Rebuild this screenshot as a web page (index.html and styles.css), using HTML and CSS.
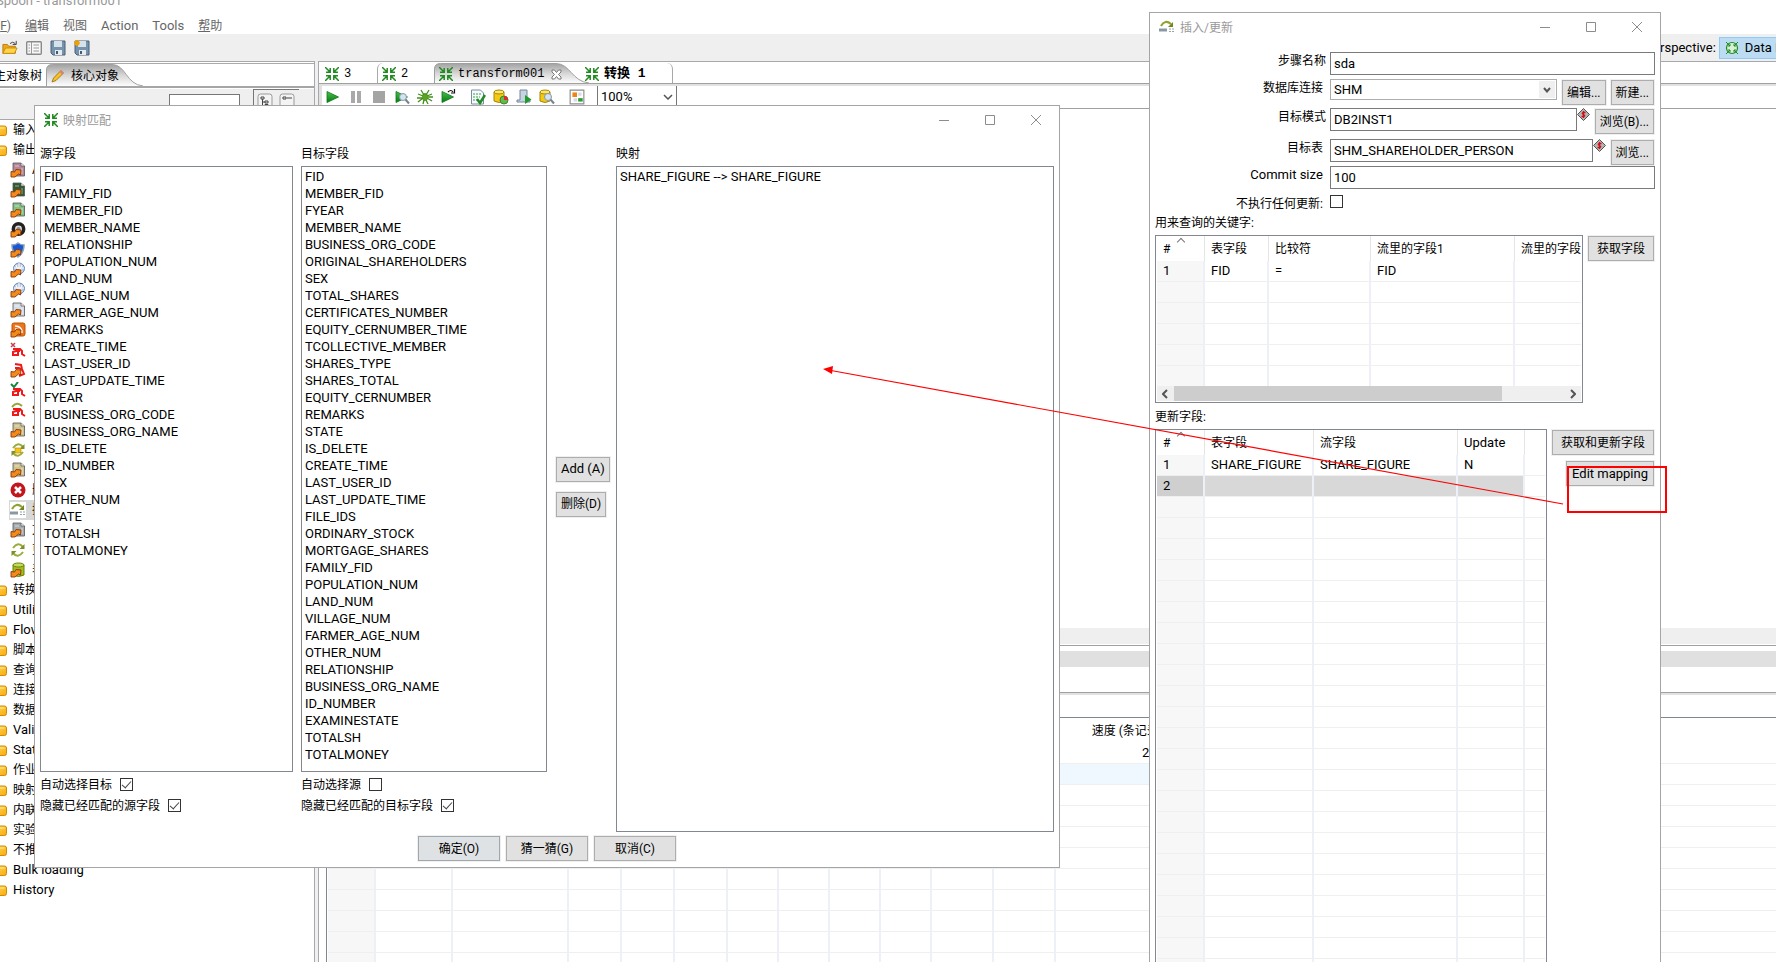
FILE: index.html
```html
<!DOCTYPE html>
<html lang="zh-CN">
<head>
<meta charset="utf-8">
<title>Spoon - transform001</title>
<link rel="stylesheet" href="styles.css">
</head>
<body>
<svg class="defs" aria-hidden="true">
  <linearGradient id="tabfill" x1="0" y1="0" x2="0" y2="1"><stop offset="0" stop-color="#a2a2a2"/><stop offset=".5" stop-color="#d6d6d6"/><stop offset="1" stop-color="#fdfdfd"/></linearGradient>
  <linearGradient id="goldfill" x1="0" y1="0" x2="1" y2="1"><stop offset="0" stop-color="#ffe56a"/><stop offset="1" stop-color="#fba80a"/></linearGradient>
  <linearGradient id="greenfill" x1="0" y1="0" x2="0" y2="1"><stop offset="0" stop-color="#4cc04c"/><stop offset="1" stop-color="#067a10"/></linearGradient>
  <symbol id="kettle" viewBox="0 0 14 14"><g fill="none" stroke="#1f8a1f" stroke-width="1.5"><path d="M0 0l5 5M5.2 1v4.2H1M14 0L9 5M8.800 1v4.200H13M0 14l5-5M5.200 13V8.800H1M14 14L9 9M8.800 13V8.800H13"/></g></symbol>
  <symbol id="folder" viewBox="0 0 16 12"><path d="M.5 2.500a2 2 0 0 1 2-2h4l2 1.500h5a2 2 0 0 1 2 2v5.500a2 2 0 0 1-2 2h-11a2 2 0 0 1-2-2z" fill="url(#goldfill)" stroke="#cf8a06"/><path d="M1 4h12.500" stroke="#fff0a0"/></symbol>
  <symbol id="out" viewBox="0 0 16 16"><path d="M1 15V9.500l3.500.500L6 7.500 11 8l-.500 5-2-1-3.500 3z" fill="#f28a1c" stroke="#8a3606" stroke-width=".9"/></symbol>
  <symbol id="doc" viewBox="0 0 16 16"><path d="M3 1h8l3.500 3v10H3z" fill="currentColor" stroke="#555" stroke-width=".8"/><path d="M11 1v3h3.500" fill="#eee" stroke="#555" stroke-width=".7"/><path d="M12 6v6M5 4h4" stroke="#fff" opacity=".5"/><use href="#out"/></symbol>
  <symbol id="ring" viewBox="0 0 16 16"><circle cx="8.500" cy="7" r="5.200" fill="#ddd" stroke="#222" stroke-width="3.500"/><circle cx="8.500" cy="7" r="2" fill="#888"/><use href="#out"/></symbol>
  <symbol id="shield" viewBox="0 0 16 16"><path d="M2 3q3.500 0 6-2 3 2 6 2 0 8-6 12-6-4-6-12z" fill="#1558d8" stroke="#8ca0b8" stroke-width="1.500"/><use href="#out"/></symbol>
  <symbol id="globe" viewBox="0 0 16 16"><circle cx="9" cy="6.500" r="5.500" fill="#b9cbe6" stroke="#7089b4"/><path d="M9 1v11M4 6h10M6 3q3 4 0 7M12 3q-3 4 0 7" stroke="#fff" fill="none"/><use href="#out"/></symbol>
  <symbol id="rss" viewBox="0 0 16 16"><rect x="2" y="1" width="13" height="13" rx="2" fill="#ee751b" stroke="#b9540a"/><path d="M5 4q7 0 7 7M5 7q4 0 4 4" stroke="#fff" stroke-width="1.600" fill="none"/><use href="#out"/></symbol>
  <symbol id="sf" viewBox="0 0 16 16"><path d="M3 7h7l2 2v3l3 2M10 9H6l-3 1v3h5v-3" fill="none" stroke="#f01818" stroke-width="2"/></symbol>
  <symbol id="sfx" viewBox="0 0 16 16"><use href="#sf"/><path d="M1 1l4 4M5 1L1 5" stroke="#c8404a" stroke-width="1.500"/></symbol>
  <symbol id="sfo" viewBox="0 0 16 16"><path d="M5 2l6 1 1 4 2 5-5 2M5 6h4l3 2" fill="none" stroke="#f01818" stroke-width="2"/><use href="#out"/></symbol>
  <symbol id="sfc" viewBox="0 0 16 16"><use href="#sf"/><path d="M1 2l3 3 4-5" fill="none" stroke="#16863a" stroke-width="2"/></symbol>
  <symbol id="sfr" viewBox="0 0 16 16"><use href="#sf"/><path d="M2 5q5-6 10-1" fill="none" stroke="#94a83a" stroke-width="2"/></symbol>
  <symbol id="cycle" viewBox="0 0 16 16"><path d="M3 6q5-7 10-1M13 10q-5 7-10 1" fill="none" stroke="#9cab3a" stroke-width="2"/><path d="M14.500 2v5h-5zM1.500 14V9h5z" fill="#7e9128"/></symbol>
  <symbol id="sync" viewBox="0 0 16 16"><use href="#cycle"/><path d="M5 6h6v5H5z" fill="#f4c514" stroke="#a88408" stroke-width=".6"/></symbol>
  <symbol id="del" viewBox="0 0 16 16"><circle cx="8" cy="8" r="7.500" fill="#c4151c"/><path d="M5 5l6 6M11 5l-6 6" stroke="#fff" stroke-width="2.500"/></symbol>
  <symbol id="upsert" viewBox="0 0 16 16"><path d="M2 7q4-7 10-2" fill="none" stroke="#94a32f" stroke-width="2.200"/><path d="M14 3v5H9z" fill="#75851c"/><path d="M0 9.500h8v3H0z" fill="#8b98a4"/><path d="M10 9.500h2v1h-2zM13 9.500h2v1h-2zM10 12h2v1h-2zM13 12h2v1h-2z" fill="#98a2aa"/></symbol>
  <symbol id="dbout" viewBox="0 0 16 16"><path d="M3 3v10q5.500 3 11 0V3z" fill="#9ebf1d" stroke="#66800c"/><ellipse cx="8.500" cy="3" rx="5.500" ry="2" fill="#c5dd55" stroke="#66800c"/><use href="#out"/></symbol>
  <symbol id="open" viewBox="0 0 18 16"><path d="M1 4h5l1.500 2H15v8H1z" fill="#f0a818" stroke="#b87808"/><path d="M4 8h13l-3 6H1z" fill="#ffd44a" stroke="#c88a0a"/><path d="M9 3q3-3 6 0M16 0v4h-4" fill="none" stroke="#333"/></symbol>
  <symbol id="panel" viewBox="0 0 16 16"><rect x=".7" y="1.700" width="14.600" height="12.600" rx="1" fill="#f7f7f7" stroke="#8a8a8a" stroke-width="1.400"/><path d="M5.500 2v12M2.500 5h1.500M2.500 8h1.500M2.500 11h1.500M7.500 5h5.500M7.500 8h5.500M7.500 11h5.500" stroke="#999"/></symbol>
  <symbol id="disk" viewBox="0 0 16 16"><path d="M1 1h14v14H3l-2-2z" fill="#7693ae" stroke="#4a6178"/><path d="M4 1h8v6H4z" fill="#d6e2ea"/><path d="M5 10h7v5H5z" fill="#e6eaec"/><path d="M6 11h2v3H6z" fill="#445a70"/></symbol>
  <symbol id="disknew" viewBox="0 0 16 16"><use href="#disk"/><path d="M3 0v6M0 3h6M1 1l4 4M5 1L1 5" stroke="#f0a000" stroke-width="1.300"/></symbol>
  <symbol id="pencil" viewBox="0 0 14 14"><path d="M1 13l1.500-4L10 1.500 12.500 4 5 11.500z" fill="#f9c021" stroke="#8e6a14" stroke-width=".8"/><path d="M10 1.500L12.500 4l-1.500 1.500L8.500 3z" fill="#e57a84"/></symbol>
  <symbol id="play" viewBox="0 0 16 16"><path d="M2 2.500l11.500 5.500L2 13.500z" fill="url(#greenfill)" stroke="#0b7a16" stroke-width=".8"/></symbol>
  <symbol id="pause" viewBox="0 0 16 16"><path d="M3 2h4v12H3zM9 2h4v12H9z" fill="#a9a9a9"/></symbol>
  <symbol id="stop" viewBox="0 0 16 16"><path d="M2 2h12v12H2z" fill="#a4a4a4"/></symbol>
  <symbol id="lens" viewBox="0 0 16 16"><circle cx="9" cy="8" r="3.500" fill="#cfe4f4" stroke="#8a98a2"/><path d="M11.500 10.500l3.500 4" stroke="#76848e" stroke-width="2"/></symbol>
  <symbol id="preview" viewBox="0 0 16 16"><use href="#play"/><use href="#lens"/></symbol>
  <symbol id="bug" viewBox="0 0 16 16"><ellipse cx="8" cy="8" rx="3" ry="4" fill="#5aa224"/><path d="M1 5l5 2M1 13l5-4M4 1l3 5M12 1L9 6M15 5l-5 2M15 12l-5-3M6 15l1-4M11 15l-2-4M0 9h5M11 8h5" stroke="#448f1d" stroke-width="1.300"/></symbol>
  <symbol id="replay" viewBox="0 0 16 16"><use href="#play"/><path d="M8 3q3-3 5 0M14.500 0v4H11" fill="none" stroke="#111" stroke-width="1.200"/></symbol>
  <symbol id="verify" viewBox="0 0 16 16"><path d="M1.500 1h9l3 3v11h-12z" fill="#f5faff" stroke="#7b8ca0"/><path d="M3 5h8M3 8h7M3 11h5" stroke="#3b9a3b" stroke-dasharray="2 1"/><path d="M7 10l3 4 5-8" fill="none" stroke="#218a22" stroke-width="2.500"/></symbol>
  <symbol id="db" viewBox="0 0 16 16"><path d="M1 3v9q5 3 10 0V3z" fill="#f4c914" stroke="#a5860a"/><ellipse cx="6" cy="3" rx="5" ry="2" fill="#ffe66b" stroke="#a5860a"/></symbol>
  <symbol id="impact" viewBox="0 0 16 16"><use href="#db"/><circle cx="11" cy="11" r="4" fill="#5fbd4a" stroke="#4a7d3a"/><path d="M11 11V7a4 4 0 0 1 4 4z" fill="#e12a2a"/></symbol>
  <symbol id="sql" viewBox="0 0 16 16"><path d="M4 1h7v10h3v2H1v-2h3z" fill="#c6d3e0" stroke="#72869a"/><path d="M9 6l6.500 4.500L9 15z" fill="#1f9a2b"/></symbol>
  <symbol id="explore" viewBox="0 0 16 16"><use href="#db"/><use href="#lens"/></symbol>
  <symbol id="results" viewBox="0 0 14 14"><path d="M1 1h12v12H1z" fill="#fff" stroke="#8c8c8c"/><path d="M3 3h4v4H3z" fill="#ee8512"/><path d="M8 8h4v3H8z" fill="#2d9c35"/><path d="M8 3h3v3H8zM4 8h3v3H4z" fill="#d5dbe6"/></symbol>
  <symbol id="persp" viewBox="0 0 14 14"><circle cx="7" cy="7" r="5.500" fill="#d8f0d8" stroke="#1f8a1f" stroke-width="1.200"/><path d="M1 1l4 4M13 1L9 5M1 13l4-4M13 13L9 9M5 3v2H3M9 3v2h2M5 11V9H3M9 11V9h2" fill="none" stroke="#1f8a1f"/></symbol>
  <symbol id="var" viewBox="0 0 13 13"><path d="M6.500.5l6 6-6 6-6-6z" fill="#b4b4b4" stroke="#555"/><path d="M8.500 4.500H6q-1.500 1 .5 2t.500 2H4.500M6.500 3v7" fill="none" stroke="#d00f14" stroke-width="1.300"/></symbol>
  <symbol id="wmin" viewBox="0 0 12 12"><path d="M1 6.500h10" stroke="#8c8c8c"/></symbol>
  <symbol id="wmax" viewBox="0 0 12 12"><path d="M1.500 1.500h9v9h-9z" fill="none" stroke="#8c8c8c"/></symbol>
  <symbol id="wclose" viewBox="0 0 12 12"><path d="M1 1l10 10M11 1L1 11" stroke="#8c8c8c"/></symbol>
  <symbol id="down" viewBox="0 0 10 6"><path d="M1 1l4 4 4-4" fill="none" stroke="#555" stroke-width="1.500"/></symbol>
  <symbol id="downbold" viewBox="0 0 8 6"><path d="M1 1l3 3.500L7 1" fill="none" stroke="#555" stroke-width="2"/></symbol>
  <symbol id="tree" viewBox="0 0 16 16"><rect x="1" y="1" width="14" height="14" rx="2.500" fill="#f4f4f4" stroke="#999"/><path d="M4 4h3v2H4zM8 8h3v2H8zM8 11.500h3v2H8zM5.500 6v6.500H8M5.500 9H8" fill="none" stroke="#444"/></symbol>
  <symbol id="fold" viewBox="0 0 16 16"><rect x="1" y="1" width="14" height="14" rx="2.500" fill="#f4f4f4" stroke="#999"/><path d="M4 4h3v2H4zM8 5h5" fill="none" stroke="#444"/></symbol>
</svg>

<div class="app">
  <header class="caption">Spoon - transform001</header>
  <nav class="menu"><a class="menu-file" href="#"><span>文件(<u>F</u>)</span></a><a href="#"><u>编</u>辑</a><a href="#">视图</a><a class="lat" href="#">Action</a><a class="lat" href="#">Tools</a><a href="#"><u>帮</u>助</a></nav>
  <div class="maintools">
    <button aria-label="打开"><svg><use href="#open"/></svg></button>
    <button aria-label="浏览"><svg><use href="#panel"/></svg></button>
    <button aria-label="保存"><svg><use href="#disk"/></svg></button>
    <button aria-label="另存为"><svg><use href="#disknew"/></svg></button>
    <div class="perspective"><span>Perspective:</span><button class="persp-btn"><svg><use href="#persp"/></svg><span>Data Integration</span></button></div>
  </div>
  <div class="work">
    <aside class="side">
      <div class="side-tabs">
        <button class="side-tab-a"><span>主对象树</span></button>
        <button class="side-tab-b"><svg class="tabshape" viewBox="0 0 97 22"><path d="M.5 22V6q0-5.500 6-5.500H66c14 0 14 20 31 21.500" fill="url(#tabfill)" stroke="#a0a0a0"/></svg><svg class="ic14"><use href="#pencil"/></svg><span>核心对象</span></button>
      </div>
      <div class="side-filter"><span>步骤</span><input type="text" aria-label="搜索步骤"><div class="side-btns"><button aria-label="展开"><svg><use href="#tree"/></svg></button><button aria-label="折叠"><svg><use href="#fold"/></svg></button></div></div>
      <ul class="steps">
        <li><svg class="fo"><use href="#folder"/></svg>输入</li>
        <li><svg class="fo"><use href="#folder"/></svg>输出</li>
        <li class="kid c-plum"><svg><use href="#doc"/></svg><span>Access 输出</span></li>
        <li class="kid c-dark"><svg><use href="#doc"/></svg><span>Cube 输出</span></li>
        <li class="kid c-green"><svg><use href="#doc"/></svg><span>Excel 输出</span></li>
        <li class="kid"><svg><use href="#ring"/></svg><span>JSON 输出</span></li>
        <li class="kid"><svg><use href="#shield"/></svg><span>LDAP 输出</span></li>
        <li class="kid"><svg><use href="#globe"/></svg><span>Palo 输出</span></li>
        <li class="kid"><svg><use href="#globe"/></svg><span>Palo 维度</span></li>
        <li class="kid c-pale"><svg><use href="#doc"/></svg><span>Properties 输出</span></li>
        <li class="kid"><svg><use href="#rss"/></svg><span>RSS 输出</span></li>
        <li class="kid"><svg><use href="#sfx"/></svg><span>Salesforce 删除</span></li>
        <li class="kid"><svg><use href="#sfo"/></svg><span>Salesforce 插入</span></li>
        <li class="kid"><svg><use href="#sfc"/></svg><span>Salesforce 更新</span></li>
        <li class="kid"><svg><use href="#sfr"/></svg><span>Salesforce 合并</span></li>
        <li class="kid c-tan"><svg><use href="#doc"/></svg><span>SQL 输出</span></li>
        <li class="kid"><svg><use href="#sync"/></svg><span>Synchronize</span></li>
        <li class="kid c-tan"><svg><use href="#doc"/></svg><span>XML 输出</span></li>
        <li class="kid"><svg><use href="#del"/></svg><span>删除</span></li>
        <li class="kid picked"><svg><use href="#upsert"/></svg><span>插入/更新</span></li>
        <li class="kid c-gray"><svg><use href="#doc"/></svg><span>文本文件输出</span></li>
        <li class="kid"><svg><use href="#cycle"/></svg><span>更新</span></li>
        <li class="kid"><svg><use href="#dbout"/></svg><span>表输出</span></li>
        <li><svg class="fo"><use href="#folder"/></svg>转换</li>
        <li class="lat"><svg class="fo"><use href="#folder"/></svg>Utility</li>
        <li class="lat"><svg class="fo"><use href="#folder"/></svg>Flow</li>
        <li><svg class="fo"><use href="#folder"/></svg>脚本</li>
        <li><svg class="fo"><use href="#folder"/></svg>查询</li>
        <li><svg class="fo"><use href="#folder"/></svg>连接</li>
        <li><svg class="fo"><use href="#folder"/></svg>数据仓库</li>
        <li class="lat"><svg class="fo"><use href="#folder"/></svg>Validation</li>
        <li class="lat"><svg class="fo"><use href="#folder"/></svg>Statistics</li>
        <li><svg class="fo"><use href="#folder"/></svg>作业</li>
        <li><svg class="fo"><use href="#folder"/></svg>映射</li>
        <li><svg class="fo"><use href="#folder"/></svg>内联</li>
        <li><svg class="fo"><use href="#folder"/></svg>实验</li>
        <li><svg class="fo"><use href="#folder"/></svg>不推荐的</li>
        <li class="lat"><svg class="fo"><use href="#folder"/></svg>Bulk loading</li>
        <li class="lat"><svg class="fo"><use href="#folder"/></svg>History</li>
      </ul>
    </aside>
    <main class="editor">
      <div class="ed-tabs">
        <button class="et et-1"><svg class="ic14"><use href="#kettle"/></svg><span>3</span></button>
        <button class="et et-2"><svg class="ic14"><use href="#kettle"/></svg><span>2</span></button>
        <button class="et et-on"><svg class="tabshape" viewBox="0 0 155 20"><path d="M.5 20V6q0-5.500 6-5.500H122c14 0 16 18 33 19.500" fill="url(#tabfill)" stroke="#a0a0a0"/></svg><svg class="ic14"><use href="#kettle"/></svg><span>transform001</span><svg class="x" viewBox="0 0 11 11"><path d="M1 1h2.500l2 2.500 2-2.500H10v2L7.500 5.500 10 8v2H7.500l-2-2.500-2 2.500H1V8l2.500-2.500L1 3z" fill="#fff" stroke="#777"/></svg></button>
        <button class="et et-last"><svg class="ic14"><use href="#kettle"/></svg><span>转换 1</span></button>
      </div>
      <div class="ed-tools">
        <button aria-label="运行"><svg><use href="#play"/></svg></button>
        <button aria-label="暂停"><svg><use href="#pause"/></svg></button>
        <button aria-label="停止"><svg><use href="#stop"/></svg></button>
        <button aria-label="预览"><svg><use href="#preview"/></svg></button>
        <button aria-label="调试"><svg><use href="#bug"/></svg></button>
        <button aria-label="重放"><svg><use href="#replay"/></svg></button>
        <button class="sep" aria-label="校验"><svg><use href="#verify"/></svg></button>
        <button aria-label="影响分析"><svg><use href="#impact"/></svg></button>
        <button aria-label="SQL"><svg><use href="#sql"/></svg></button>
        <button aria-label="数据库浏览"><svg><use href="#explore"/></svg></button>
        <button class="sep" aria-label="显示结果"><svg><use href="#results"/></svg></button>
        <div class="zoombox"><select aria-label="缩放"><option>100%</option></select><svg><use href="#down"/></svg></div>
      </div>
      <div class="canvas"></div>
      <div class="hscroll"></div>
      <div class="res-head"></div>
      <div class="res-title"></div>
      <div class="res-tabs"></div>
      <div class="res-bar"></div>
      <div class="metrics">
        <table class="grid">
          <colgroup><col class="m0"><col class="m1"><col class="m2"><col class="m3"><col class="m3"><col class="m3"><col class="m4"><col class="m4"><col class="m4"><col class="m4"><col class="m5"><col class="m5"><col class="m6"><col></colgroup>
          <thead><tr><th><th><th><th><th><th><th><th><th><th><th><th><th>速度 (条记录/秒)<th></tr></thead>
          <tbody>
            <tr><td><td><td><td><td><td><td><td><td><td><td><td><td>23,255<td></tr>
            <tr class="tint"><td><td><td><td><td><td><td><td><td><td><td><td><td>7,692<td></tr>
            <tr><td><td><td><td><td><td><td><td><td><td><td><td><td><td></tr>
            <tr><td><td><td><td><td><td><td><td><td><td><td><td><td><td></tr>
            <tr><td><td><td><td><td><td><td><td><td><td><td><td><td><td></tr>
            <tr><td><td><td><td><td><td><td><td><td><td><td><td><td><td></tr>
            <tr><td><td><td><td><td><td><td><td><td><td><td><td><td><td></tr>
            <tr><td><td><td><td><td><td><td><td><td><td><td><td><td><td></tr>
            <tr><td><td><td><td><td><td><td><td><td><td><td><td><td><td></tr>
            <tr><td><td><td><td><td><td><td><td><td><td><td><td><td><td></tr>
            <tr><td><td><td><td><td><td><td><td><td><td><td><td><td><td></tr>
          </tbody>
        </table>
      </div>
    </main>
  </div>
</div>

<section class="win win-map" role="dialog" aria-label="映射匹配">
  <div class="titlebar"><svg class="ic14"><use href="#kettle"/></svg><h2>映射匹配</h2><div class="winbtns"><button aria-label="最小化"><svg><use href="#wmin"/></svg></button><button aria-label="最大化"><svg><use href="#wmax"/></svg></button><button aria-label="关闭"><svg><use href="#wclose"/></svg></button></div></div>
  <div class="mapcols">
    <div class="mapcol">
      <label class="cap" for="src">源字段</label>
      <select id="src" class="list" multiple>
        <option>FID</option><option>FAMILY_FID</option><option>MEMBER_FID</option><option>MEMBER_NAME</option><option>RELATIONSHIP</option><option>POPULATION_NUM</option><option>LAND_NUM</option><option>VILLAGE_NUM</option><option>FARMER_AGE_NUM</option><option>REMARKS</option><option>CREATE_TIME</option><option>LAST_USER_ID</option><option>LAST_UPDATE_TIME</option><option>FYEAR</option><option>BUSINESS_ORG_CODE</option><option>BUSINESS_ORG_NAME</option><option>IS_DELETE</option><option>ID_NUMBER</option><option>SEX</option><option>OTHER_NUM</option><option>STATE</option><option>TOTALSH</option><option>TOTALMONEY</option>
      </select>
      <div class="checks">
        <label>自动选择目标<input type="checkbox" checked></label>
        <label>隐藏已经匹配的源字段<input type="checkbox" checked></label>
      </div>
    </div>
    <div class="mapcol">
      <label class="cap" for="dst">目标字段</label>
      <select id="dst" class="list" multiple>
        <option>FID</option><option>MEMBER_FID</option><option>FYEAR</option><option>MEMBER_NAME</option><option>BUSINESS_ORG_CODE</option><option>ORIGINAL_SHAREHOLDERS</option><option>SEX</option><option>TOTAL_SHARES</option><option>CERTIFICATES_NUMBER</option><option>EQUITY_CERNUMBER_TIME</option><option>TCOLLECTIVE_MEMBER</option><option>SHARES_TYPE</option><option>SHARES_TOTAL</option><option>EQUITY_CERNUMBER</option><option>REMARKS</option><option>STATE</option><option>IS_DELETE</option><option>CREATE_TIME</option><option>LAST_USER_ID</option><option>LAST_UPDATE_TIME</option><option>FILE_IDS</option><option>ORDINARY_STOCK</option><option>MORTGAGE_SHARES</option><option>FAMILY_FID</option><option>POPULATION_NUM</option><option>LAND_NUM</option><option>VILLAGE_NUM</option><option>FARMER_AGE_NUM</option><option>OTHER_NUM</option><option>RELATIONSHIP</option><option>BUSINESS_ORG_NAME</option><option>ID_NUMBER</option><option>EXAMINESTATE</option><option>TOTALSH</option><option>TOTALMONEY</option>
      </select>
      <div class="checks">
        <label>自动选择源<input type="checkbox"></label>
        <label>隐藏已经匹配的目标字段<input type="checkbox" checked></label>
      </div>
    </div>
    <div class="mapmid"><button class="btn lat">Add (A)</button><button class="btn">删除(D)</button></div>
    <div class="mapcol">
      <label class="cap" for="maps">映射</label>
      <select id="maps" class="list" multiple><option>SHARE_FIGURE --&gt; SHARE_FIGURE</option></select>
    </div>
  </div>
  <div class="footer"><button class="btn primary">确定(O)</button><button class="btn">猜一猜(G)</button><button class="btn">取消(C)</button></div>
</section>

<section class="win win-step" role="dialog" aria-label="插入/更新">
  <div class="titlebar"><svg class="ic16"><use href="#upsert"/></svg><h2>插入/更新</h2><div class="winbtns"><button aria-label="最小化"><svg><use href="#wmin"/></svg></button><button aria-label="最大化"><svg><use href="#wmax"/></svg></button><button aria-label="关闭"><svg><use href="#wclose"/></svg></button></div></div>
  <form class="form">
    <label for="f1">步骤名称</label><div class="fr"><input id="f1" type="text" value="sda"></div>
    <label for="f2">数据库连接 </label><div class="fr gap"><div class="combo"><select id="f2"><option>SHM</option></select><span><svg><use href="#downbold"/></svg></span></div><button type="button" class="btn">编辑...</button><button type="button" class="btn">新建...</button></div>
    <label for="f3">目标模式</label><div class="fr"><input id="f3" type="text" value="DB2INST1"><svg class="var"><use href="#var"/></svg><button type="button" class="btn">浏览(B)...</button></div>
    <label for="f4">目标表 </label><div class="fr"><input id="f4" type="text" value="SHM_SHAREHOLDER_PERSON"><svg class="var"><use href="#var"/></svg><button type="button" class="btn">浏览...</button></div>
    <label class="lat" for="f5">Commit size </label><div class="fr"><input id="f5" type="text" value="100"></div>
    <label for="f6">不执行任何更新: </label><div class="fr"><input id="f6" type="checkbox"></div>
  </form>
  <p class="cap">用来查询的关键字:</p>
  <div class="tblrow">
    <div class="tbl tbl-keys">
      <div class="tblclip">
        <table class="grid">
          <colgroup><col class="k0"><col class="k1"><col class="k2"><col class="k3"><col></colgroup>
          <thead><tr><th class="sorted">#<th>表字段<th>比较符<th>流里的字段1<th>流里的字段2</tr></thead>
          <tbody>
            <tr><td>1<td>FID<td>=<td>FID<td></tr>
            <tr><td><td><td><td><td></tr>
            <tr><td><td><td><td><td></tr>
            <tr><td><td><td><td><td></tr>
            <tr><td><td><td><td><td></tr>
            <tr><td><td><td><td><td></tr>
          </tbody>
        </table>
      </div>
      <div class="sbar"><svg viewBox="0 0 6 10"><path d="M5 1L1 5l4 4" fill="none" stroke="#555" stroke-width="2"/></svg><div class="track"><i></i></div><svg viewBox="0 0 6 10"><path d="M1 1l4 4-4 4" fill="none" stroke="#555" stroke-width="2"/></svg></div>
    </div>
    <div class="tblbtns"><button class="btn">获取字段</button></div>
  </div>
  <p class="cap">更新字段:</p>
  <div class="tblrow grow">
    <div class="tbl tbl-upd">
      <table class="grid">
        <colgroup><col class="k0"><col class="u1"><col class="u2"><col class="u3"><col></colgroup>
        <thead><tr><th class="sorted">#<th>表字段<th>流字段<th class="lat">Update<th></tr></thead>
        <tbody>
          <tr><td>1<td>SHARE_FIGURE<td>SHARE_FIGURE<td>N<td></tr>
          <tr class="sel"><td>2<td><td><td><td></tr>
          <tr><td><td><td><td><td></tr><tr><td><td><td><td><td></tr><tr><td><td><td><td><td></tr><tr><td><td><td><td><td></tr>
          <tr><td><td><td><td><td></tr><tr><td><td><td><td><td></tr><tr><td><td><td><td><td></tr><tr><td><td><td><td><td></tr>
          <tr><td><td><td><td><td></tr><tr><td><td><td><td><td></tr><tr><td><td><td><td><td></tr><tr><td><td><td><td><td></tr>
          <tr><td><td><td><td><td></tr><tr><td><td><td><td><td></tr><tr><td><td><td><td><td></tr><tr><td><td><td><td><td></tr>
          <tr><td><td><td><td><td></tr><tr><td><td><td><td><td></tr><tr><td><td><td><td><td></tr><tr><td><td><td><td><td></tr>
          <tr><td><td><td><td><td></tr><tr><td><td><td><td><td></tr><tr><td><td><td><td><td></tr>
        </tbody>
      </table>
    </div>
    <div class="tblbtns"><button class="btn">获取和更新字段</button><button class="btn lat">Edit mapping</button></div>
  </div>
</section>

<svg class="notes" aria-hidden="true"><path d="M1563 504L831 370.500" stroke="#f00" stroke-width="1.200"/><path d="M823 369l10-3-1 8z" fill="#f00"/><rect x="1568" y="467" width="98" height="45" fill="none" stroke="#f00" stroke-width="2"/></svg>
</body>
</html>
```
FILE: styles.css
```css
* { box-sizing: border-box; }
html, body { height: 100%; }
body { margin: 0; overflow: hidden; position: relative; background: #fff; color: #000; font: 12px/16px Roboto, "Noto Sans CJK SC", sans-serif; }
button, input, select { font: inherit; color: inherit; margin: 0; }
button { border: 0; padding: 0; background: none; }
a { color: inherit; text-decoration: none; }
h2, p, ul { margin: 0; padding: 0; font-weight: 400; font-size: 12px; }
svg { display: block; flex: none; }
.defs { position: absolute; width: 0; height: 0; }
.lat { font-size: 13px; }
.ic14 { width: 14px; height: 14px; }
.ic16 { width: 16px; height: 16px; }

/* main window */
.app { height: 100%; display: flex; flex-direction: column; }
.caption { height: 17px; line-height: 16px; margin-top: -7px; font-size: 13px; color: #999; text-indent: -4px; }
.menu { height: 24px; padding-top: 8px; display: flex; gap: 14px; color: #666; }
.menu-file { width: 11px; display: flex; justify-content: flex-end; white-space: nowrap; }
.maintools { height: 27px; background: #efefef; display: flex; align-items: center; gap: 8px; padding-left: 2px; }
.maintools svg { width: 16px; height: 16px; }
.perspective { margin-left: auto; display: flex; align-items: center; gap: 3px; width: 131px; font-size: 13px; white-space: nowrap; }
.persp-btn { height: 22px; display: flex; align-items: center; gap: 6px; padding: 0 5px; border: 1px solid #90c8f6; background: #bcdcf4; }
.persp-btn svg { width: 14px; height: 14px; }
.work { flex: 1; min-height: 0; display: flex; background: #f0f0f0; gap: 3px; }

.side { width: 315px; flex: none; display: flex; flex-direction: column; border: 1px solid #a8a8ac; border-left: 0; border-bottom: 0; background: #fff; padding-top: 1px; }
.side-tabs { height: 25px; border-top: 1px solid #aaa; border-bottom: 2px solid #a6a6a6; display: flex; align-items: flex-end; }
.side-tab-a { width: 46px; height: 20px; display: flex; justify-content: flex-end; align-items: center; padding-right: 4px; white-space: nowrap; }
.side-tab-b { position: relative; width: 97px; height: 22px; display: flex; align-items: center; gap: 6px; padding: 2px 0 0 5px; }
.tabshape { position: absolute; left: 0; top: 0; width: 100%; height: 100%; }
.side-tab-b .ic14, .side-tab-b span, .et-on .ic14, .et-on span, .et-on .x { position: relative; }
.side-filter { height: 32px; background: #efefef; border-top: 1px solid #fff; border-bottom: 1px solid #a8a8a8; display: flex; padding-right: 15px; align-items: flex-start; }
.side-filter > span { width: 1px; margin-top: 8px; margin-left: -24px; margin-right: 192px; white-space: nowrap; }
.side-filter input { width: 71px; height: 24px; margin-top: 5px; border: 1px solid #777; background: #fff; margin-right: 13px; }
.side-btns { width: 46px; height: 30px; border: 1px solid #777; border-width: 1px 0 0 1px; display: flex; align-items: flex-start; gap: 6px; padding: 3px 3px; }
.side-btns svg { width: 16px; height: 16px; }
.steps { flex: 1; list-style: none; overflow: hidden; }
.steps li { height: 20px; display: flex; align-items: center; white-space: nowrap; }
.fo { width: 16px; height: 12px; margin-left: -9px; margin-right: 6px; }
.kid { padding-left: 10px; gap: 6px; }
.kid svg { width: 16px; height: 16px; }
.picked { margin-left: 9px; padding-left: 1px; background: #d8d8d8; }
.picked svg { background: #fff; }
.c-plum { --i: #b58698; } .c-dark { --i: #2f5a33; } .c-green { --i: #82c284; } .c-pale { --i: #d6dbe8; } .c-tan { --i: #cdc391; } .c-gray { --i: #a4acb2; }
.kid svg { color: var(--i); }

.editor { flex: 1; min-width: 0; display: flex; flex-direction: column; border: 1px solid #a8a8ac; border-width: 1px 0 0 1px; background: #fff; }
.ed-tabs { height: 22px; padding-top: 1px; border-bottom: 1px solid #a0a0a0; display: flex; font-family: "Liberation Mono", "Noto Sans CJK SC", monospace; }
.et { height: 20px; display: flex; align-items: center; gap: 5px; padding-top: 2px; white-space: nowrap; }
.et-1 { width: 58px; padding-left: 6px; }
.et-2 { width: 57px; padding-left: 4px; border-left: 1px solid #a8a8a8; border-radius: 6px 0 0 0; }
.et-on { width: 150px; padding-left: 5px; position: relative; }
.et-on .tabshape { width: 155px; }
.et-on .x { width: 11px; height: 11px; margin-left: 2px; }
.et-last { width: 89px; padding-left: 1px; border-right: 1px solid #a8a8a8; border-radius: 0 6px 0 0; font-weight: 700; font-size: 13px; position: relative; }
.ed-tools { height: 25px; border-top: 2px solid #e1e1e1; border-left: 3px solid #e1e1e1; border-bottom: 1px solid #a0a0a0; display: flex; align-items: center; gap: 7px; padding-left: 3px; }
.ed-tools svg { width: 16px; height: 16px; }
.ed-tools .sep { margin-left: 7px; }
.zoombox { width: 80px; height: 22px; margin-left: 5px; border: 1px solid #777; border-width: 0 1px; display: flex; align-items: center; position: relative; }
.zoombox select { appearance: none; width: 100%; border: 0; background: none; padding: 0 3px; font-size: 13px; }
.ed-tools .zoombox svg { width: 10px; height: 6px; position: absolute; right: 3px; pointer-events: none; }
.canvas { flex: 1; }
.hscroll { height: 17px; background: #efefef; border-bottom: 1px solid #fff; }
.res-head { height: 6px; border-top: 1px solid #a0a0a4; }
.res-title { height: 16px; background: #e0e0e0; }
.res-tabs { height: 26px; border-bottom: 1px solid #a0a0a0; }
.res-bar { height: 24px; border-top: 2px solid #e1e1e1; border-left: 3px solid #e1e1e1; margin-left: 2px; }
.metrics { height: 245px; margin-left: 7px; border-top: 1px solid #7f8791; border-left: 1px solid #7f8791; padding-left: 1px; overflow: hidden; }
.m0 { width: 48px; } .m1 { width: 77px; } .m2 { width: 116px; } .m3 { width: 53px; } .m4 { width: 51px; } .m5 { width: 62px; } .m6 { width: 128px; }
.metrics .grid th:nth-child(n) { border-color: transparent; text-align: right; padding-right: 3px; }
.metrics .grid td:nth-child(13) { text-align: right; padding-right: 3px; }
.metrics .grid td:nth-child(n+13) { border-right: 0; }
.tint td { background: #eff7ff; }
.tint td:last-child { background: #fff; }

/* grids */
.grid { width: 100%; table-layout: fixed; border-collapse: separate; border-spacing: 0; }
.grid th { height: 25px; padding: 0 0 0 6px; font-weight: 400; font-size: 12px; text-align: left; white-space: nowrap; overflow: hidden; border-right: 1px solid #e5e5e5; }
.grid th.lat { font-size: 13px; }
.grid td { height: 21px; padding: 0 0 0 6px; font-size: 13px; line-height: 16px; white-space: nowrap; border-right: 2px solid #edf0f7; border-bottom: 1px solid #efefef; }
.grid td:first-child { background: #f7f7f7; }
.grid th:last-child, .grid td:last-child { border-right: 0; }
.grid .sel td { background: #d8d8d8; }
.grid .sel td:first-child { background: #cfcfcf; }
.grid .sel td:last-child { background: #fff; }
.sorted { position: relative; }
.sorted::after { content: ""; position: absolute; left: 21px; top: 3px; width: 5px; height: 5px; border: solid #777; border-width: 1px 0 0 1px; transform: rotate(45deg); }

/* dialogs */
.win { position: absolute; display: flex; flex-direction: column; background: #fff; border: 1px solid #a5a5a5; padding: 0 5px; }
.titlebar { display: flex; align-items: center; height: 28px; margin-bottom: 11px; padding-left: 4px; gap: 5px; color: #999; }
.titlebar h2 { padding-top: 1px; }
.winbtns { margin-left: auto; display: flex; gap: 34px; padding-right: 12px; }
.winbtns svg { width: 12px; height: 12px; }
.cap { display: block; height: 16px; line-height: 18px; margin-bottom: 5px; }
.btn { height: 25px; flex: none; border: 1px solid #adadad; background: #e1e1e1; box-shadow: 0 0 0 1px #f0f0f0; padding: 0 4px; white-space: nowrap; }
input[type="checkbox"] { appearance: none; width: 13px; height: 13px; border: 1px solid #333; background: #fff; position: relative; flex: none; }
input[type="checkbox"]:checked::after { content: ""; position: absolute; left: 3px; top: 0; width: 4px; height: 8px; border: solid #444; border-width: 0 1px 1px 0; transform: rotate(42deg); }

.win-map { left: 34px; top: 105px; width: 1026px; height: 763px; }
.mapcols { flex: 1; min-height: 0; display: grid; grid-template-columns: 253px 246px 53px 1fr; column-gap: 8px; }
.mapcol { display: flex; flex-direction: column; min-height: 0; }
.list { appearance: none; flex: 1; min-height: 0; width: 100%; border: 1px solid #828790; border-radius: 0; background: #fff; padding: 2px 0 0; overflow: hidden; font-size: 13px; outline: 0; }
.list option { height: 17px; min-height: 17px; padding: 0 3px; line-height: 17px; }
.checks { padding: 2px 0 16px; }
.checks label { height: 21px; display: flex; align-items: center; gap: 8px; }
.mapmid { display: flex; flex-direction: column; justify-content: center; align-items: flex-start; gap: 10px; padding: 0 0 4px 1px; }
.footer { display: flex; justify-content: center; gap: 6px; padding: 4px 0 6px; }
.footer .btn { width: 82px; }
.primary { background: #dfe2e4; border-color: #9fa8ad; }

.win-step { left: 1149px; top: 12px; bottom: -2px; width: 512px; overflow: hidden; }
.form { display: grid; grid-template-columns: 175px 1fr; grid-template-rows: 27px 29px 31px 27px 29px 14px; margin-bottom: 5px; }
.form > label { text-align: right; padding-right: 4px; white-space: pre; line-height: 18px; }
.fr { display: flex; align-items: flex-start; min-width: 0; }
.fr.gap { gap: 5px; }
.fr input[type="text"] { flex: 1; min-width: 0; height: 23px; border: 1px solid #7a7a7a; border-radius: 0; padding: 0 3px; font-size: 13px; outline: 0; }
.fr .btn { margin-top: 1px; }
.fr .btn:last-child { margin-right: 1px; }
.var { width: 13px; height: 13px; margin-right: 5px; }
.combo { flex: 1; height: 21px; border: 1px solid #adadad; display: flex; position: relative; }
.combo select { appearance: none; flex: 1; border: 0; background: none; padding: 0 3px; font-size: 13px; }
.combo span { position: absolute; right: 1px; top: 1px; bottom: 1px; width: 16px; background: #efefef; display: flex; align-items: center; justify-content: center; pointer-events: none; }
.combo svg { width: 8px; height: 6px; }
.tblrow { display: flex; justify-content: space-between; align-items: flex-start; margin-bottom: 5px; }
.tblrow.grow { flex: 1; min-height: 0; align-items: stretch; margin-bottom: 0; }
.tbl { border: 1px solid #828790; padding: 0 1px 1px; overflow: hidden; }
.tbl-keys { width: 428px; }
.tbl-upd { width: 392px; }
.tblclip { height: 150px; overflow: hidden; }
.sbar { height: 15px; background: #efefef; display: flex; align-items: center; justify-content: space-between; padding: 0 5px; gap: 6px; }
.sbar svg { width: 6px; height: 10px; }
.track { flex: 1; height: 100%; }
.track i { display: block; width: 84%; height: 100%; background: #cdcdcd; }
.tblbtns { display: flex; flex-direction: column; align-items: flex-end; gap: 6px; padding: 1px 1px 0 0; }
.tblbtns .btn { padding: 0 8px; }
.tblbtns .btn.lat { padding: 0 5px; }
.k0 { width: 48px; } .k1 { width: 64px; } .k2 { width: 102px; } .k3 { width: 144px; }
.u1 { width: 109px; } .u2 { width: 144px; } .u3 { width: 67px; }

.notes { position: absolute; left: 0; top: 0; width: 100%; height: 100%; pointer-events: none; }
```
